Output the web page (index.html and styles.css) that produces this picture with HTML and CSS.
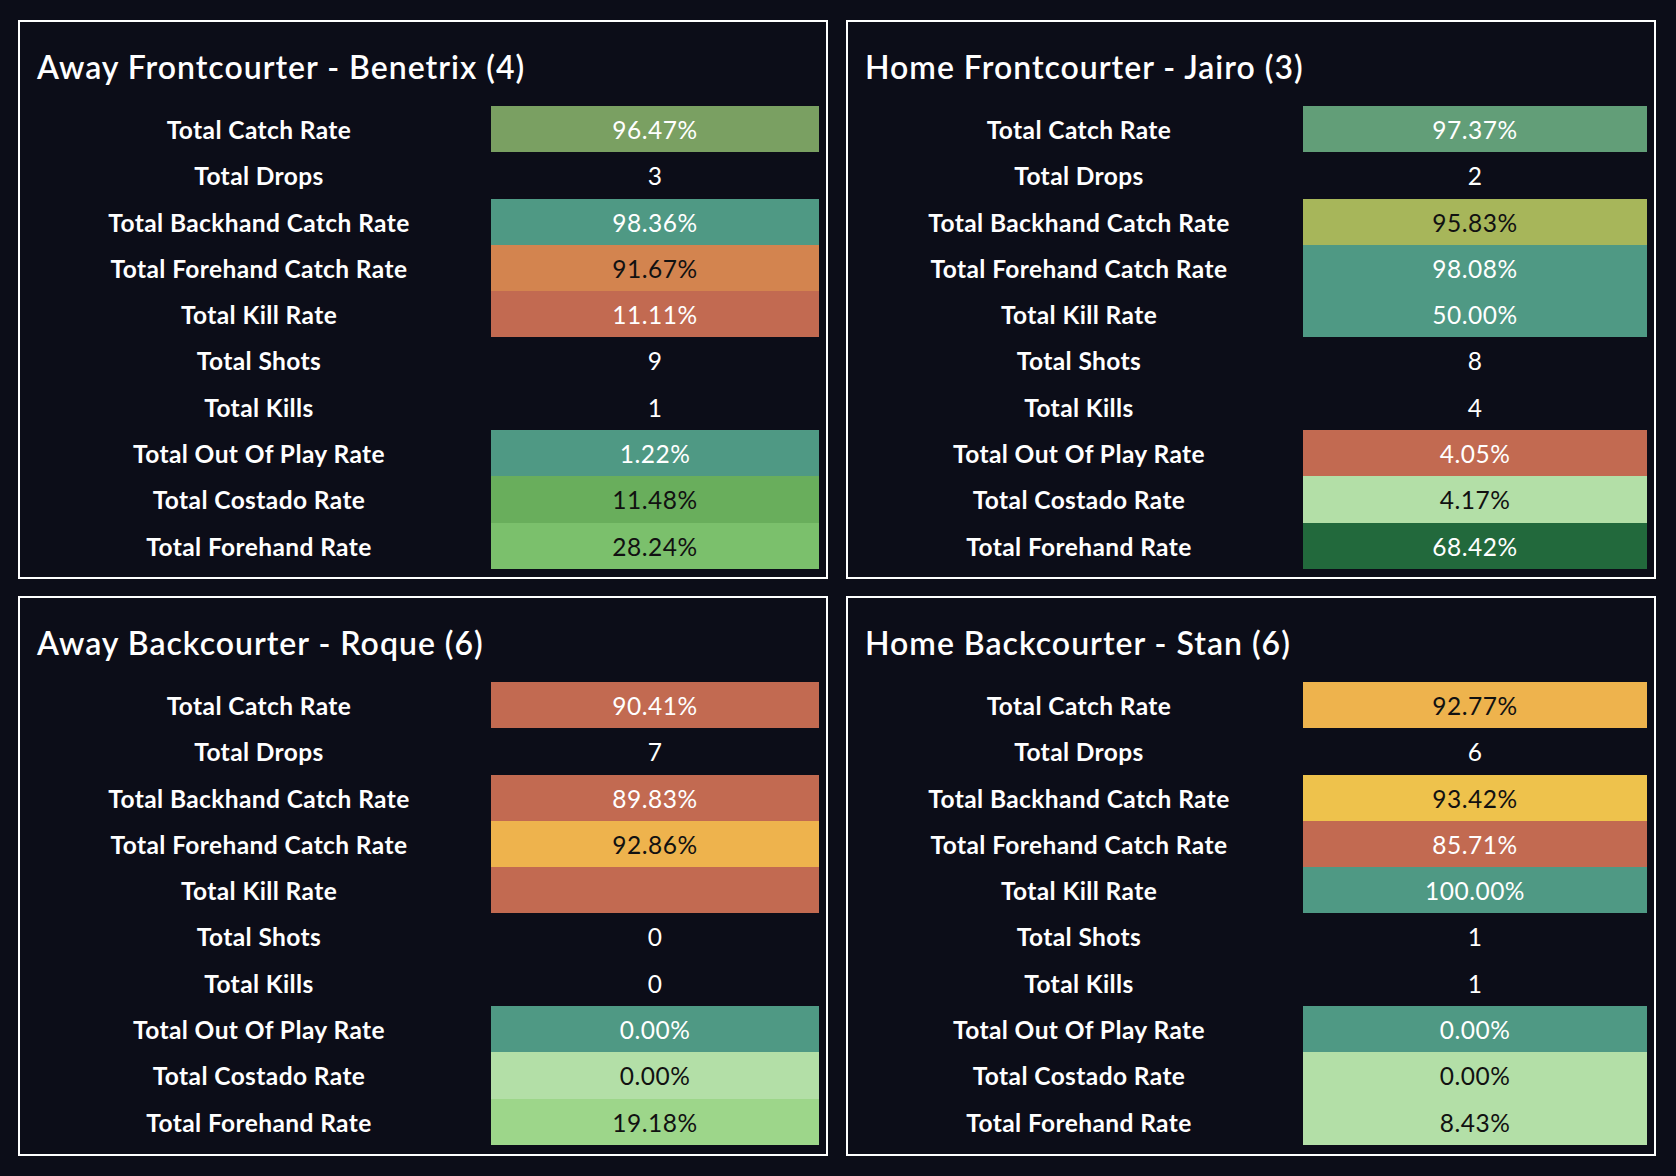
FILE: index.html
```html
<!DOCTYPE html>
<html lang="en">
<head>
<meta charset="utf-8">
<title>Player Catch Stats</title>
<link rel="stylesheet" href="styles.css">
</head>
<body>
<main class="dashboard">
  <section class="panel panel--left">
    <h2 class="panel-title">Away Frontcourter - Benetrix (4)</h2>
    <div class="stats">
      <div class="label">Total Catch Rate</div><div class="value c-olive">96.47%</div>
      <div class="label">Total Drops</div><div class="value">3</div>
      <div class="label">Total Backhand Catch Rate</div><div class="value c-teal">98.36%</div>
      <div class="label">Total Forehand Catch Rate</div><div class="value c-orange">91.67%</div>
      <div class="label">Total Kill Rate</div><div class="value c-red">11.11%</div>
      <div class="label">Total Shots</div><div class="value">9</div>
      <div class="label">Total Kills</div><div class="value">1</div>
      <div class="label">Total Out Of Play Rate</div><div class="value c-teal">1.22%</div>
      <div class="label">Total Costado Rate</div><div class="value c-green">11.48%</div>
      <div class="label">Total Forehand Rate</div><div class="value c-lgreen">28.24%</div>
    </div>
  </section>
  <section class="panel panel--right">
    <h2 class="panel-title">Home Frontcourter - Jairo (3)</h2>
    <div class="stats">
      <div class="label">Total Catch Rate</div><div class="value c-sea">97.37%</div>
      <div class="label">Total Drops</div><div class="value">2</div>
      <div class="label">Total Backhand Catch Rate</div><div class="value c-yolive">95.83%</div>
      <div class="label">Total Forehand Catch Rate</div><div class="value c-teal">98.08%</div>
      <div class="label">Total Kill Rate</div><div class="value c-teal">50.00%</div>
      <div class="label">Total Shots</div><div class="value">8</div>
      <div class="label">Total Kills</div><div class="value">4</div>
      <div class="label">Total Out Of Play Rate</div><div class="value c-red">4.05%</div>
      <div class="label">Total Costado Rate</div><div class="value c-pale">4.17%</div>
      <div class="label">Total Forehand Rate</div><div class="value c-dgreen">68.42%</div>
    </div>
  </section>
  <section class="panel panel--left">
    <h2 class="panel-title">Away Backcourter - Roque (6)</h2>
    <div class="stats">
      <div class="label">Total Catch Rate</div><div class="value c-red">90.41%</div>
      <div class="label">Total Drops</div><div class="value">7</div>
      <div class="label">Total Backhand Catch Rate</div><div class="value c-red">89.83%</div>
      <div class="label">Total Forehand Catch Rate</div><div class="value c-amber">92.86%</div>
      <div class="label">Total Kill Rate</div><div class="value c-red"></div>
      <div class="label">Total Shots</div><div class="value">0</div>
      <div class="label">Total Kills</div><div class="value">0</div>
      <div class="label">Total Out Of Play Rate</div><div class="value c-teal">0.00%</div>
      <div class="label">Total Costado Rate</div><div class="value c-pale">0.00%</div>
      <div class="label">Total Forehand Rate</div><div class="value c-mgreen">19.18%</div>
    </div>
  </section>
  <section class="panel panel--right">
    <h2 class="panel-title">Home Backcourter - Stan (6)</h2>
    <div class="stats">
      <div class="label">Total Catch Rate</div><div class="value c-amber">92.77%</div>
      <div class="label">Total Drops</div><div class="value">6</div>
      <div class="label">Total Backhand Catch Rate</div><div class="value c-yellow">93.42%</div>
      <div class="label">Total Forehand Catch Rate</div><div class="value c-red">85.71%</div>
      <div class="label">Total Kill Rate</div><div class="value c-teal">100.00%</div>
      <div class="label">Total Shots</div><div class="value">1</div>
      <div class="label">Total Kills</div><div class="value">1</div>
      <div class="label">Total Out Of Play Rate</div><div class="value c-teal">0.00%</div>
      <div class="label">Total Costado Rate</div><div class="value c-pale">0.00%</div>
      <div class="label">Total Forehand Rate</div><div class="value c-pale">8.43%</div>
    </div>
  </section>
</main>
</body>
</html>
```

FILE: styles.css
```css
html, body {
  margin: 0;
  padding: 0;
  background: #0c0d18;
}

body {
  font-family: "Lato", "Liberation Sans", sans-serif;
  color: #ffffff;
}

.dashboard {
  display: grid;
  grid-template-columns: 810px 810px;
  grid-template-rows: 559px 560px;
  column-gap: 18px;
  row-gap: 17px;
  padding: 20px 0 0 18px;
}

.panel {
  box-sizing: border-box;
  border: 2px solid #ffffff;
  padding: 0 7px 8px 7px;
  display: flex;
  flex-direction: column;
}

.panel-title {
  box-sizing: border-box;
  margin: 0;
  height: 84px;
  padding: 25px 0 0 10px;
  font-size: 32px;
  line-height: 40px;
  letter-spacing: 1px;
  font-weight: 600;
  color: #ffffff;
  white-space: nowrap;
}

.stats {
  display: grid;
  grid-auto-rows: 46.3px;
}

.panel--left .stats {
  grid-template-columns: 464px 328px;
}

.panel--right .stats {
  grid-template-columns: 448px 344px;
}

.label,
.value {
  box-sizing: border-box;
  text-align: center;
  font-size: 24.5px;
  line-height: 42px;
  padding-top: 3px;
  white-space: nowrap;
}

.label {
  font-weight: 700;
  letter-spacing: 0.4px;
  color: #ffffff;
}

.value {
  font-weight: 400;
  letter-spacing: 0.5px;
  color: #ffffff;
}

.c-olive  { background: #7aa062; }
.c-teal   { background: #4f9984; }
.c-orange { background: #d3844f; color: #111111; }
.c-red    { background: #c26a51; }
.c-green  { background: #69ae5c; color: #111111; }
.c-lgreen { background: #7bc06c; color: #111111; }
.c-sea    { background: #629e78; }
.c-yolive { background: #a7b65a; color: #111111; }
.c-pale   { background: #b3dfa7; color: #111111; }
.c-dgreen { background: #22693c; }
.c-amber  { background: #eeb34d; color: #111111; }
.c-yellow { background: #eec24c; color: #111111; }
.c-mgreen { background: #9dd68a; color: #111111; }
```
